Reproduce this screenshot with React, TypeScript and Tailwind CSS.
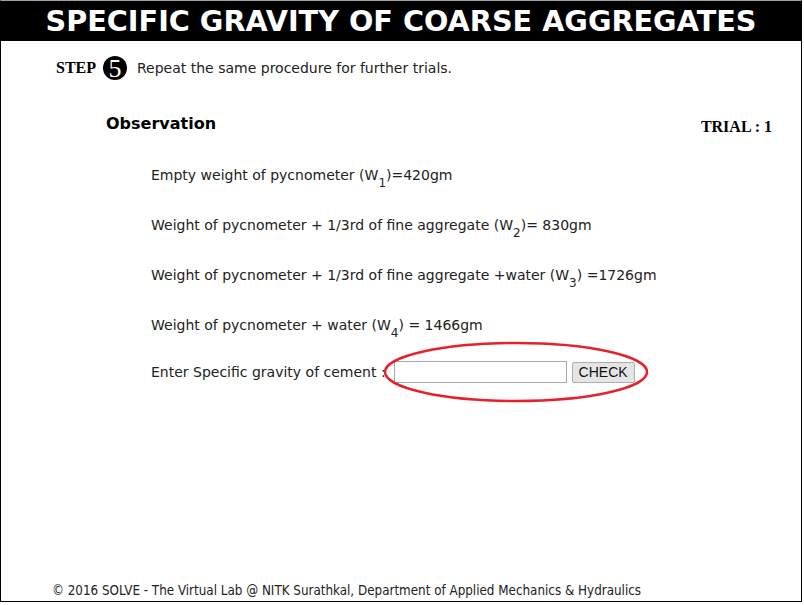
import React from 'react';

const VERDANA = "font-['Verdana','DejaVu_Sans',sans-serif]";

function Sub({ n }: { n: string }) {
    return <sub className="text-[12px] align-[-4px]">{n}</sub>;
}

export default function App() {
    return (
        <div className="w-[804px] h-[605px] bg-white">
            <div className="w-[802px] h-[602px] flex flex-col border-t border-t-[#a0a0a0] border-x border-b border-black">
                {/* Title bar */}
                <header className="h-[40px] bg-black flex items-center justify-center">
                    <h1 className={`${VERDANA} text-white font-bold text-[28.7px] leading-none`}>
                        SPECIFIC GRAVITY OF COARSE AGGREGATES
                    </h1>
                </header>

                {/* Step line */}
                <div className="flex items-center mt-[15px] pl-[55px] h-[24px]">
                    <span className="font-['Liberation_Serif',serif] font-bold text-[16px] text-black">STEP</span>
                    <span className="ml-[7px] w-[24px] h-[24px] shrink-0 rounded-full bg-black text-white flex items-center justify-center font-['Liberation_Serif',serif] text-[26px] leading-none pt-[2px]">
                        5
                    </span>
                    <span className={`${VERDANA} ml-[10px] text-[14px] text-[#222]`}>
                        Repeat the same procedure for further trials.
                    </span>
                </div>

                {/* Observation heading */}
                <div className="flex items-end justify-between mt-[32px] pl-[105px] pr-[29px]">
                    <h2 className={`${VERDANA} font-bold text-[16px] text-black`}>Observation</h2>
                    <span className="font-['Liberation_Serif',serif] font-bold text-[16px] text-black translate-y-[3px]">TRIAL : 1</span>
                </div>

                {/* Readings */}
                <div className={`${VERDANA} text-[14px] text-[#222] pl-[150px] mt-[30px] flex flex-col gap-[31px] leading-[19px]`}>
                    <p>Empty weight of pycnometer (W<Sub n="1" />)=420gm</p>
                    <p>Weight of pycnometer + 1/3rd of fine aggregate (W<Sub n="2" />)= 830gm</p>
                    <p>Weight of pycnometer + 1/3rd of fine aggregate +water (W<Sub n="3" />) =1726gm</p>
                    <p>Weight of pycnometer + water (W<Sub n="4" />) = 1466gm</p>
                    <div className="flex items-center -mt-[5px]">
                        <span>Enter Specific gravity of cement :</span>
                        <div className="relative flex items-center ml-[8px]">
                            <input
                                type="text"
                                className="w-[173px] h-[22px] border border-[#a9a9a9] bg-white outline-none"
                            />
                            <button className="ml-[5px] h-[21px] w-[63px] border border-[#adadad] rounded-[2px] bg-[#e5e5e5] font-['Liberation_Sans',Arial,sans-serif] text-[14px] text-[#111] leading-none">
                                CHECK
                            </button>
                            <svg
                                className="absolute left-[-11px] top-[-20px] pointer-events-none"
                                width="266"
                                height="62"
                                viewBox="0 0 266 62"
                            >
                                <ellipse cx="133" cy="31" rx="131" ry="29" fill="none" stroke="#e8202a" strokeWidth="2.5" />
                            </svg>
                        </div>
                    </div>
                </div>

                {/* Footer */}
                <footer className="mt-auto pl-[51px] pb-0 font-['DejaVu_Sans_Condensed','DejaVu_Sans',sans-serif] text-[13.3px] text-[#222]">
                    © 2016 SOLVE - The Virtual Lab @ NITK Surathkal, Department of Applied Mechanics &amp; Hydraulics
                </footer>
            </div>
        </div>
    );
}
